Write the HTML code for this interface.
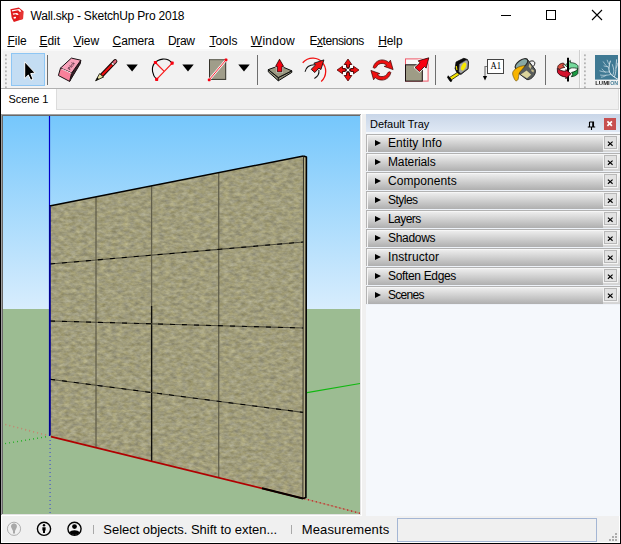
<!DOCTYPE html>
<html>
<head>
<meta charset="utf-8">
<title>Wall.skp - SketchUp Pro 2018</title>
<style>
html,body{margin:0;padding:0;}
body{width:621px;height:544px;overflow:hidden;background:#fff;font-family:"Liberation Sans",sans-serif;font-size:12px;color:#000;position:relative;}
.abs{position:absolute;}
#win{position:absolute;left:0;top:0;width:619px;height:542px;border:1px solid #000;background:#fff;overflow:hidden;}
/* coordinates inside #win are offset by 1px (border) -> use wrapper at -1,-1 */
#o{position:absolute;left:-1px;top:-1px;width:621px;height:544px;}
.t{position:absolute;white-space:nowrap;line-height:14px;}
#title{left:30.6px;top:9px;font-size:12px;letter-spacing:-0.21px;}
.menu{top:34px;font-size:12px;}
.menu u{text-decoration:underline;text-decoration-thickness:1px;text-underline-offset:1px;}
#toolbar{left:1px;top:49px;width:619px;height:39px;background:#f2f2f2;}
#tbline{left:1px;top:88px;width:619px;height:1px;background:#b0b0b0;}
#tabbar{left:56px;top:89px;width:563px;height:21px;border-right:1px solid #dcdcdc;background:#f0f0f0;border-bottom:1px solid #dcdcdc;border-left:1px solid #dcdcdc;box-sizing:border-box;}
#tab{left:1px;top:89px;width:55px;height:26px;background:#fff;}
#main{left:362px;top:114px;width:258px;height:402px;background:#f0f0f0;}
#vp{left:1px;top:114px;width:361px;height:402px;}
#tray{left:366px;top:114px;width:254px;height:402px;background:#f5f8fc;}
.item:after{content:"";position:absolute;left:0;top:18px;width:254px;height:1px;background:#eef2f8;}
#trayhead{left:0;top:0;width:254px;height:18px;background:linear-gradient(#c9d6e8,#dfe8f4);}
.item{left:0;width:254px;height:19px;background:#eef2f8;}
.item .g{position:absolute;left:0;top:0;width:254px;height:18px;border-top:1px solid #b2b2b2;border-left:1px solid #b4b4b4;background:linear-gradient(90deg,rgba(255,255,255,0) 236px,rgba(255,255,255,0.45) 236px),linear-gradient(#f3f3f3,#ebebeb 8%,#afafaf);box-sizing:border-box;box-shadow:inset 1px 1px 0 #f6f6f6;}
.item .tri{position:absolute;left:9px;top:6px;width:0;height:0;border-left:6px solid #000;border-top:3.5px solid transparent;border-bottom:3.5px solid transparent;}
.item .lab{position:absolute;left:22px;top:2px;font-size:12px;line-height:14px;white-space:nowrap;}
.item .x{position:absolute;left:237px;top:1px;width:15px;height:15px;box-sizing:border-box;border:1px solid #f4f4f4;background:#e2e2e2;box-shadow:inset 0 0 0 1px #b8b8b8;}
#status{left:2px;top:516px;width:617px;height:26px;background:#f0f0f0;}
</style>
</head>
<body>
<div id="win"><div id="o">

<!-- title bar -->
<svg class="abs" style="left:6px;top:3px" width="24" height="24" viewBox="6 3 24 24">
  <path d="M10.4 9.3 L18.8 7.6 L23.4 11.2 L23 18.9 L13.9 22 L11.7 18 Z" fill="#e01a1c"/>
  <path d="M19.6 12.6 L23.4 11.2 L23 18.9 L19.4 20.1 Z" fill="#e63434"/>
  <path d="M11.8 10.3 L19.2 9 C20.4 9.6 21 10.6 21.4 11.7 L19.3 11.8 C19 11 18.6 10.5 17.9 10.3 L12.2 11.4 Z" fill="#fff"/>
  <path d="M12.7 13.5 L17 12.9 C17.9 13.3 18.4 13.9 18.7 14.8 L16.8 14.9 C16.5 14.5 16.1 14.3 15.5 14.2 L13.2 14.7 Z" fill="#fff"/>
  <path d="M13.5 17.1 L15.9 16.7 L16 18.2 L13.9 18.7 Z" fill="#fff"/>
</svg>
<div class="t" id="title">Wall.skp - SketchUp Pro 2018</div>
<svg class="abs" style="left:495px;top:5px" width="115" height="22" viewBox="0 0 115 22">
  <path d="M6 10.5 H16" stroke="#000" stroke-width="1" fill="none"/>
  <rect x="51.5" y="5.5" width="9" height="9" stroke="#000" stroke-width="1" fill="none"/>
  <path d="M97 5 L107 15 M107 5 L97 15" stroke="#000" stroke-width="1.1" fill="none"/>
</svg>

<!-- menu bar -->
<div class="t menu" style="left:7.4px"><u>F</u>ile</div>
<div class="t menu" style="left:39.4px"><u>E</u>dit</div>
<div class="t menu" style="left:73.4px"><u>V</u>iew</div>
<div class="t menu" style="left:112.6px;letter-spacing:-0.15px"><u>C</u>amera</div>
<div class="t menu" style="left:168px;letter-spacing:-0.4px">D<u>r</u>aw</div>
<div class="t menu" style="left:209.4px"><u>T</u>ools</div>
<div class="t menu" style="left:250.8px;letter-spacing:0.25px"><u>W</u>indow</div>
<div class="t menu" style="left:309.4px;letter-spacing:-0.42px">E<u>x</u>tensions</div>
<div class="t menu" style="left:378.2px;letter-spacing:-0.1px"><u>H</u>elp</div>

<!-- toolbar -->
<div class="abs" id="toolbar"></div>
<div class="abs" style="left:1px;top:49px;width:619px;height:2px;background:#f8f8f8"></div>
<div class="abs" style="left:1px;top:49px;width:2px;height:39px;background:#f8f8f8"></div>
<div class="abs" id="tbline"></div>
<svg class="abs" id="tbicons" style="left:0;top:49px" width="621" height="40" viewBox="0 49 621 40">
  <!-- gripper 1 -->
  <g fill="#b4b4b4">
    <rect x="5" y="54.4" width="1.8" height="1.8"/><rect x="5" y="58.4" width="1.8" height="1.8"/><rect x="5" y="62.4" width="1.8" height="1.8"/><rect x="5" y="66.4" width="1.8" height="1.8"/><rect x="5" y="70.4" width="1.8" height="1.8"/><rect x="5" y="74.4" width="1.8" height="1.8"/><rect x="5" y="78.4" width="1.8" height="1.8"/><rect x="5" y="82.4" width="1.8" height="1.8"/><rect x="5" y="86.4" width="1.8" height="1.8"/>
  </g>
  <!-- select button -->
  <rect x="11.5" y="53.5" width="33" height="32" fill="#c4ddf3" stroke="#8ec6f4"/>
  <path d="M24.7 61.8 L24.7 78.6 L28.3 75 L30.7 80.2 L33 79.2 L30.7 73.6 L35.2 73 Z" fill="#000" stroke="#fff" stroke-width="1" stroke-linejoin="round"/>
  <!-- separators -->
  <g stroke="#6e6e6e" stroke-width="1">
    <path d="M47.5 55 V85"/><path d="M257.5 55 V85"/><path d="M435.5 55 V85"/><path d="M545.5 55 V85"/>
  </g>
  <!-- eraser -->
  <g stroke="#1a1014" stroke-width="1" stroke-linejoin="round">
    <path d="M71.6 73.1 L80.8 60.2 L80.3 63.6 L69.6 81.4 Z" fill="#3a2028"/>
    <path d="M60.5 68.1 L71.4 58.1 L80.8 60.2 L71.6 73.1 Z" fill="#f9a2ba"/>
    <path d="M60.5 68.1 L71.6 73.1 L69.6 81.4 L58.4 75.5 Z" fill="#f8809a"/>
  </g>
  <path d="M61.6 68.9 L71.3 73.3" stroke="#fde0e8" stroke-width="1" fill="none"/>
  <text transform="translate(69.9 70.4) rotate(-54)" opacity="0.92" font-family="'Liberation Sans',sans-serif" font-size="4.6" font-weight="bold" fill="#4a2838" textLength="9" lengthAdjust="spacingAndGlyphs">Pink</text>
  <!-- pencil -->
  <path d="M101.6 75.4 L115.2 61.3" stroke="#1a0808" stroke-width="4.3" stroke-linecap="round" fill="none"/>
  <path d="M95.6 80.8 L99.6 73.6 L103.6 77 Z" fill="#e6dfa0" stroke="#1a1a10" stroke-width="0.9" stroke-linejoin="round"/>
  <path d="M95.5 80.9 L97.4 77.6 L98.9 78.9 Z" fill="#000"/>
  <path d="M102 75 L112 64.7" stroke="#f01010" stroke-width="2.1" fill="none"/>
  <path d="M112.2 64.5 L113.5 63.2" stroke="#f4f4f4" stroke-width="2.1" fill="none"/>
  <path d="M114.2 62.4 L115.3 61.2" stroke="#e0687a" stroke-width="2.4" stroke-linecap="round" fill="none"/>
  <!-- dropdown arrows -->
  <g fill="#000">
    <path d="M126.4 64.4 H137.8 L132.1 71.4 Z"/>
    <path d="M182.3 64.4 H193.7 L188 71.4 Z"/>
    <path d="M238.3 64.4 H249.7 L244 71.4 Z"/>
  </g>
  <!-- arc -->
  <path d="M156.6 79.3 C152.4 75.4 150.8 68 154.4 63.4 C158 58.8 167 56.6 172.2 63.1" fill="none" stroke="#000" stroke-width="1.1"/>
  <path d="M156.6 79.3 L172.2 63.1 M155.4 62.5 L164.2 71.3" fill="none" stroke="#f81818" stroke-width="1.2"/>
  <g fill="#f80010"><rect x="153.9" y="61" width="3.1" height="3.1" rx="0.6"/><rect x="170.6" y="61.6" width="3.1" height="3.1" rx="0.6"/><rect x="155.1" y="77.8" width="3.1" height="3.1" rx="0.6"/></g>
  <!-- rectangle -->
  <rect x="209.5" y="59.6" width="16.2" height="19.8" fill="#a09d8a" stroke="#34322a" stroke-width="1"/>
  <path d="M209.5 59.6 H225.7" stroke="#77756a" stroke-width="1"/>
  <path d="M209.2 79.8 L226 59.9" stroke="#fff" stroke-width="2.3"/>
  <path d="M209.2 79.8 L226 59.9" stroke="#ff2030" stroke-width="1"/>
  <g fill="#f80010"><rect x="207.8" y="78.4" width="2.8" height="2.8" rx="0.7"/><rect x="224.6" y="58.5" width="2.8" height="2.8" rx="0.7"/></g>
  <!-- push/pull -->
  <g stroke="#0c0c0c" stroke-width="1" stroke-linejoin="round">
    <path d="M268.3 69.6 L268.3 71.8 L278.3 80.8 L291.8 72.4 L291.8 70.8 L278.3 77.5 Z" fill="#8e8c76"/>
    <path d="M268.3 69.6 L279.5 65.6 L291.8 70.8 L278.3 77.5 Z" fill="#9c9a82"/>
    <path d="M278.3 77.5 V80.8" fill="none"/>
  </g>
  <path d="M279.5 59.3 L283.6 66.4 L281.9 66.4 L281.9 71.8 L277.3 71.8 L277.3 66.4 L275.6 66.4 Z" fill="#f80010" stroke="#e8e8e0" stroke-width="2" stroke-linejoin="round"/>
  <path d="M279.5 59.3 L283.6 66.4 L281.9 66.4 L281.9 71.8 L277.3 71.8 L277.3 66.4 L275.6 66.4 Z" fill="#f80010" stroke="#200000" stroke-width="0.8" stroke-linejoin="round"/>
  <!-- offset / follow me -->
  <path d="M302.7 62.8 C305.6 59.6 309.6 58 313.4 58.2 C320.4 58.6 325.8 64.4 325.7 71.4 C325.6 75.4 323.8 79 321.2 81.4" fill="none" stroke="#f01010" stroke-width="1.3"/>
  <path d="M315 64.7 C309.6 64.4 305.6 67.4 305.1 71.8 M318.9 69.8 C319.4 73.6 317.6 76.8 314.4 78.4" fill="none" stroke="#111" stroke-width="1.1"/>
  <path d="M323.9 59.9 L320.9 69.6 L318.9 68.0 L314.8 72.5 L311.2 69.3 L315.6 64.9 L313.9 63.2 Z" fill="#f01010" stroke="#111" stroke-width="0.9" stroke-linejoin="round"/>
  <!-- move -->
  <g transform="translate(348 70)">
    <path d="M0 -8.6 L8.6 0 L0 8.6 L-8.6 0 Z" fill="#3a2222"/>
    <g fill="#f01010" stroke="#3a0000" stroke-width="0.7" stroke-linejoin="round">
      <path d="M0 -11 L3.9 -5.4 L1.3 -5.4 L1.3 -2.4 L-1.3 -2.4 L-1.3 -5.4 L-3.9 -5.4 Z" transform="rotate(0)"/>
      <path d="M0 -11 L3.9 -5.4 L1.3 -5.4 L1.3 -2.4 L-1.3 -2.4 L-1.3 -5.4 L-3.9 -5.4 Z" transform="rotate(90)"/>
      <path d="M0 -11 L3.9 -5.4 L1.3 -5.4 L1.3 -2.4 L-1.3 -2.4 L-1.3 -5.4 L-3.9 -5.4 Z" transform="rotate(180)"/>
      <path d="M0 -11 L3.9 -5.4 L1.3 -5.4 L1.3 -2.4 L-1.3 -2.4 L-1.3 -5.4 L-3.9 -5.4 Z" transform="rotate(270)"/>
    </g>
    <g fill="#fdfdfd"><rect x="-5" y="-5" width="3" height="3"/><rect x="2" y="-5" width="3" height="3"/><rect x="-5" y="2" width="3" height="3"/><rect x="2" y="2" width="3" height="3"/><rect x="-1.2" y="-1.2" width="2.4" height="2.4"/></g>
    <g fill="#e4e4e4"><rect x="-2.4" y="-2.4" width="1.3" height="1.3"/><rect x="1.1" y="-2.4" width="1.3" height="1.3"/><rect x="-2.4" y="1.1" width="1.3" height="1.3"/><rect x="1.1" y="1.1" width="1.3" height="1.3"/></g>
  </g>
  <!-- rotate -->
  <g transform="translate(382 70)" fill="#f01010" stroke="#3a0000" stroke-width="0.7" stroke-linejoin="round">
    <path d="M-8.8 -2.6 C-8 -7 -4 -10.1 0 -10.1 C2.6 -10.1 5 -9.2 6.9 -7.5 L8.4 -9.8 L11.1 -0.4 L2.2 -3.6 L4.6 -4.6 C3.4 -6 1.6 -6.6 0 -6.6 C-2.6 -6.6 -4.8 -5 -5.7 -2.9 C-6.4 -1.6 -8.6 -1.4 -8.8 -2.6 Z"/>
    <path d="M-8.8 -2.6 C-8 -7 -4 -10.1 0 -10.1 C2.6 -10.1 5 -9.2 6.9 -7.5 L8.4 -9.8 L11.1 -0.4 L2.2 -3.6 L4.6 -4.6 C3.4 -6 1.6 -6.6 0 -6.6 C-2.6 -6.6 -4.8 -5 -5.7 -2.9 C-6.4 -1.6 -8.6 -1.4 -8.8 -2.6 Z" transform="rotate(180)"/>
  </g>
  <!-- scale -->
  <rect x="405.5" y="58.9" width="22.6" height="22.2" fill="#f8f8f8" stroke="#f05868" stroke-width="1"/>
  <rect x="405.5" y="64.8" width="16.8" height="16.3" fill="#9e9c86" stroke="#1a1010" stroke-width="1"/>
  <path d="M428.8 57.8 L426.2 68.1 L424.4 66.6 L419.4 71.6 L415 67.5 L420 62.8 L418.2 60.8 Z" fill="#f80010" stroke="#fff" stroke-width="2" stroke-linejoin="round"/>
  <path d="M428.8 57.8 L426.2 68.1 L424.4 66.6 L419.4 71.6 L415 67.5 L420 62.8 L418.2 60.8 Z" fill="#f80010" stroke="#200000" stroke-width="0.8" stroke-linejoin="round"/>
  <!-- tape measure -->
  <path d="M457.8 72.2 L459.4 74.6 L451.4 79.9 L449.6 77.4 Z" fill="#f2e200" stroke="#1a1a00" stroke-width="0.8" stroke-linejoin="round"/>
  <path d="M448.3 75.8 L452 80.9 L450.4 81.6 L447.5 77.4 Z" fill="#000" stroke="#000" stroke-width="0.8" stroke-linejoin="round"/>
  <path d="M456.1 62 L463.8 58.3 L467.4 59.5 L468.6 62 L468.1 68.8 L460.9 74.4 L456.8 72.4 L455.1 68.7 Z" fill="#0a0a0a" stroke="#0a0a0a" stroke-width="0.8" stroke-linejoin="round"/>
  <path d="M459.4 64.2 L466 60.2 C467.6 60 468 61.2 468 62.4 L467.6 68.5 L460.9 73.6 L458.9 71.8 Z" fill="#a6a6a6" stroke="#5a5a5a" stroke-width="0.5" stroke-linejoin="round"/>
  <ellipse cx="463.6" cy="66.5" rx="2.1" ry="4.2" transform="rotate(27 463.6 66.5)" fill="#f6e800"/>
  <path d="M456.3 66 L456.9 70" stroke="#e8d800" stroke-width="1.2"/>
  <!-- text tool -->
  <rect x="487.5" y="59.5" width="16" height="14" fill="#fff" stroke="#444" stroke-width="1"/>
  <text x="495.7" y="68.9" font-family="'Liberation Serif',serif" font-size="9.6" text-anchor="middle" fill="#000" textLength="10.6" lengthAdjust="spacingAndGlyphs">A1</text>
  <path d="M487 66.5 H485 V76.4" fill="none" stroke="#777" stroke-width="1.2"/>
  <path d="M482.9 76 H487.1 L485 80.6 Z" fill="#000"/>
  <!-- paint bucket -->
  <g stroke-linejoin="round">
    <path d="M529.4 61.8 C531.6 60.2 534.8 60.8 534.8 63.2 C534.8 64.8 533.8 66.2 532.4 66.9" fill="none" stroke="#1a1a1a" stroke-width="1"/>
    <path d="M527.4 59.4 L535.2 69.6 C536.2 72.4 534.2 76 532 77.8 C530.4 79.2 528.4 80 526.8 79.5 L519.2 73.8 L515.4 68 Z" fill="#585c5c" stroke="#1e1e1e" stroke-width="0.9"/>
    <path d="M526.6 70.6 L531.2 74.8 L527 78.3 L520.8 74.4 Z" fill="#dcd49c"/>
    <path d="M529.4 63.6 L531.6 66.6 L530.6 68.9 L528.6 66.6 Z" fill="#c8bc88"/>
    <path d="M531.6 69 L534 70.5 L533.4 72.4 L531.2 71 Z" fill="#c8bc88"/>
    <ellipse cx="521.5" cy="63.9" rx="7.3" ry="3.7" transform="rotate(-36 521.5 63.9)" fill="#88a8a4" stroke="#2a2a2a" stroke-width="1.2"/>
    <path d="M524.8 65.8 C522 65.6 519 66.6 516.8 68 C514.6 69.4 513 71 512.7 72.6 C512.4 74.6 513.2 76.4 513.9 77.8 C514.4 79 515 80.4 515.8 80.8 C516.8 81 517.8 80.2 518.2 79 C518.8 77.4 518.4 75.6 519 73.8 C519.6 72.2 520.8 70.8 522 69.6 C523 68.4 524.4 67 524.8 65.8 Z" fill="#f8b400" stroke="#5a4200" stroke-width="0.6"/>
  </g>
  <!-- orbit-like (red/green arrows) -->
  <ellipse cx="567.8" cy="69.6" rx="7" ry="3.2" fill="#fff"/>
  <g stroke-linejoin="round" stroke-width="0.8">
    <path d="M557.6 67.4 C557.8 65 560.2 63.4 563.4 63 L564.8 64.6 L562.6 65.4 L564.8 67.4 C562.4 67.8 560.6 68.4 559.6 69.4 Z" fill="#dc5040" stroke="#2a0a08"/>
    <path d="M565.2 65.3 L570.3 60.4 L570.5 62.7 C573.6 62.6 576.6 63.8 578 65.8 L578 68.8 C576 67.6 573 67.8 570.3 68 L569.8 69.2 Z" fill="#74da9c" stroke="#0c3018"/>
    <path d="M578 68.8 L577.8 73.6 C576.6 75.4 574.2 76.4 571.4 76.7 L572.8 74.2 L571.6 72.4 C574.4 72 576.8 70.6 578 68.8 Z" fill="#1c9c44" stroke="#06280e"/>
  </g>
  <path d="M568 57.8 V81.6" stroke="#000" stroke-width="2"/>
  <path d="M557.3 68.2 C559 70 562.4 71.4 566 71.2 L565.8 69.6 L570.9 73.7 L565.8 78.8 L566 77 C562.4 76.8 558.8 75 557.5 72.4 Z" fill="#d4102c" stroke="#200006" stroke-width="0.8" stroke-linejoin="round"/>
  <!-- toolbar divider + gripper 2 -->
  <path d="M579.5 50 V88" stroke="#cfcfcf" stroke-width="1"/>
  <path d="M580.5 50 V88" stroke="#fafafa" stroke-width="1"/>
  <g fill="#b4b4b4">
    <rect x="584" y="54.4" width="1.8" height="1.8"/><rect x="584" y="58.4" width="1.8" height="1.8"/><rect x="584" y="62.4" width="1.8" height="1.8"/><rect x="584" y="66.4" width="1.8" height="1.8"/><rect x="584" y="70.4" width="1.8" height="1.8"/><rect x="584" y="74.4" width="1.8" height="1.8"/><rect x="584" y="78.4" width="1.8" height="1.8"/><rect x="584" y="82.4" width="1.8" height="1.8"/><rect x="584" y="86.4" width="1.8" height="1.8"/>
  </g>
  <!-- lumion -->
  <rect x="595" y="55" width="23" height="24.6" fill="#3f7993"/>
  <g stroke="#eef6fa" fill="none" stroke-linecap="round" opacity="0.92">
    <path d="M618 79.3 C615 77.6 612.6 76 611 74.4 C609.4 72.4 608.8 70.4 608.9 68.1 C609 65.6 609.6 63.4 610.3 61.1" stroke-width="1"/>
    <path d="M614.5 76.6 C615.4 74.4 615.8 72 615.9 69.5 C616 66.2 616.3 63 616.6 59.7" stroke-width="0.8"/>
    <path d="M612.6 75.6 C613.4 73.8 613.8 72 613.8 70.2 C613.6 68.2 613 66.4 612.4 64.6" stroke-width="0.7"/>
    <path d="M611 74.4 C607.6 75.4 604 75.6 600.5 75.1 M609.6 71.8 C606.4 72.4 603 72 599.8 70.9 M608.9 68.1 C606.6 66.4 604.8 64.2 603.3 61.8 M607.4 66.6 C606.2 66.6 605 66.4 604 66 M609.4 64.6 C608.4 63.4 607.6 61.8 607.2 60.2 M616 68 C617 66.6 617.6 65 617.8 63.2 M605.4 72.2 C604 71.4 602.8 70.2 602 69 M606 75.4 C604.6 76.4 603 77 601.4 77.2" stroke-width="0.6"/>
  </g>
  <g opacity="0.96">
  <text x="595.2" y="84.9" font-family="'Liberation Sans',sans-serif" font-weight="bold" font-size="5.3" fill="#111" textLength="14.6" lengthAdjust="spacingAndGlyphs">LUMI</text>
  <text x="610.2" y="84.9" font-family="'Liberation Sans',sans-serif" font-weight="bold" font-size="5.3" fill="#3f7993" textLength="8" lengthAdjust="spacingAndGlyphs">ON</text>
  </g>
</svg>

<!-- scene tabs -->
<div class="abs" id="tabbar"></div>
<div class="abs" id="tab"></div>
<div class="t" style="left:8.6px;top:91.5px;font-size:11px;letter-spacing:-0.08px">Scene 1</div>

<!-- main -->
<div class="abs" id="main"></div>
<svg class="abs" id="vp" width="361" height="402" viewBox="1 114 361 402">
  <defs>
    <linearGradient id="sky" x1="0" y1="0" x2="0" y2="1">
      <stop offset="0" stop-color="#75c7fc"/>
      <stop offset="1" stop-color="#d8edfd"/>
    </linearGradient>
    <filter id="stone" x="0" y="0" width="100%" height="100%" color-interpolation-filters="sRGB">
      <feTurbulence type="fractalNoise" baseFrequency="0.17 0.3" numOctaves="3" seed="7" result="n"/>
      <feColorMatrix in="n" type="matrix" values="0.260 0.06 0 0 0.471  0.260 0.04 0 0 0.466  0.234 -0.08 0 0 0.409  0 0 0 0 1"/>
      <feComposite in2="SourceGraphic" operator="in"/>
    </filter>
  </defs>
  <rect x="1" y="114" width="361" height="402" fill="#fff"/>
  <rect x="3" y="116" width="357" height="193" fill="url(#sky)"/>
  <rect x="3" y="309" width="357" height="205" fill="#9cbc92"/>
  <path d="M1 114.5 H361 M1.5 114 V515" stroke="#a0a0a0" stroke-width="1" fill="none"/>
  <path d="M360.5 115 V515 M2 514.5 H361" stroke="#e3e3e3" stroke-width="1" fill="none"/>
  <path d="M2 115.5 H360 M2.5 115 V514" stroke="#696969" stroke-width="1" fill="none"/>
  <!-- axes behind -->
  <path d="M49.5 116 V436" stroke="#0000c8" stroke-width="1.2"/>
  <path d="M307 392.6 L360 383.5" stroke="#10b810" stroke-width="1.1"/>
  <path d="M50.1 440 V513" stroke="#5668c2" stroke-width="1.5" stroke-dasharray="1 3"/>
  <path d="M46 435 L5 424.4" stroke="#c8806c" stroke-width="1.6" stroke-dasharray="1 3.1"/>
  <path d="M46 436.8 L5 443.6" stroke="#28b028" stroke-width="1.4" stroke-dasharray="1 3.05"/>
  <path d="M304 498.7 L360 513.2" stroke="#b48c6c" stroke-width="1.2" opacity="0.7"/>
  <path d="M304 498.7 L360 513.2" stroke="#c80010" stroke-width="1.05" stroke-dasharray="1.2 2.85"/>
  <!-- wall -->
  <path d="M49.5 206 L303.5 156 L303 498.5 L50 436.5 Z" fill="#97906c" filter="url(#stone)"/>
  <path d="M303.5 156 L306.5 157 L306 497.5 L303 498.5 Z" fill="#b4ad88"/>
  <!-- inner lines -->
  <g stroke="#615e4b" stroke-width="1.25" fill="none">
    <path d="M96 197 L96 447.6"/>
    <path d="M151.6 186 L151.6 461"/>
    <path d="M218.7 173 L218.7 477.4"/>
  </g>
  <path d="M151.6 306 L151.6 461" stroke="#0c0c0a" stroke-width="1.3" fill="none"/>
  <g stroke="#4a4839" stroke-width="1.1" fill="none">
    <path d="M50 264 L303.3 242"/>
    <path d="M50 321 L303.2 328"/>
    <path d="M50 379.2 L303.1 412.4"/>
  </g>
  <g stroke="#000" stroke-width="1.1" fill="none" stroke-dasharray="5 7">
    <path d="M50 264 L303.3 242"/>
    <path d="M50 321 L303.2 328"/>
    <path d="M50 379.2 L303.1 412.4"/>
  </g>
  <!-- profile lines -->
  <g stroke="#000" fill="none" stroke-linejoin="round">
    <path d="M49.5 206 L303.5 156" stroke-width="1.5"/>
    <path d="M303.5 156 L302.9 498.4" stroke-width="0.9" stroke="#2a281e"/>
    <path d="M303.5 156 L306.4 157 L305.9 497.6 L303 498.5" stroke-width="1.6"/>
    <path d="M51 436.6 L303 498.5" stroke-width="1.7" stroke="#b00000"/>
    <path d="M262 488.2 L303 498.5" stroke-width="2" stroke="#050000"/>
    <path d="M49.9 206 V435.6" stroke-width="1.8" stroke="#000090"/>
  </g>
</svg>

<div class="abs" id="tray">
  <div class="abs" id="trayhead"></div>
  <div class="t" style="left:4px;top:3px;font-size:11px">Default Tray</div>
  <div class="abs" style="left:220.6px;top:5.5px;width:9px;height:10px">
    <svg width="9" height="10" viewBox="0 0 9 10"><path d="M2.5 1 H6.5 V6 M2.5 1 V6 M5.75 1 V6 M0.8 6 H8.2 M4.5 6 V9" fill="none" stroke="#000" stroke-width="1.1"/></svg>
  </div>
  <div class="abs" style="left:238px;top:4px;width:12px;height:12px;background:#c75050">
    <svg width="12" height="12" viewBox="0 0 12 12"><path d="M3.4 3.4 L7.9 7.9 M7.9 3.4 L3.4 7.9" stroke="#fff" stroke-width="1.7" fill="none"/></svg>
  </div>
  <div class="abs item" style="top:20px"><div class="g"></div><div class="tri"></div><div class="lab" style="letter-spacing:0.05px">Entity Info</div><div class="x"><svg width="13" height="13" viewBox="0 0 13 13" style="position:absolute;left:0;top:0"><path d="M3.9 5.6 L8.6 9.8 M8.6 5.6 L3.9 9.8" stroke="#000" stroke-width="1.15" fill="none"/></svg></div></div>
  <div class="abs item" style="top:39px"><div class="g"></div><div class="tri"></div><div class="lab" style="letter-spacing:-0.13px">Materials</div><div class="x"><svg width="13" height="13" viewBox="0 0 13 13" style="position:absolute;left:0;top:0"><path d="M3.9 5.6 L8.6 9.8 M8.6 5.6 L3.9 9.8" stroke="#000" stroke-width="1.15" fill="none"/></svg></div></div>
  <div class="abs item" style="top:58px"><div class="g"></div><div class="tri"></div><div class="lab" style="letter-spacing:0.08px">Components</div><div class="x"><svg width="13" height="13" viewBox="0 0 13 13" style="position:absolute;left:0;top:0"><path d="M3.9 5.6 L8.6 9.8 M8.6 5.6 L3.9 9.8" stroke="#000" stroke-width="1.15" fill="none"/></svg></div></div>
  <div class="abs item" style="top:77px"><div class="g"></div><div class="tri"></div><div class="lab" style="letter-spacing:-0.53px">Styles</div><div class="x"><svg width="13" height="13" viewBox="0 0 13 13" style="position:absolute;left:0;top:0"><path d="M3.9 5.6 L8.6 9.8 M8.6 5.6 L3.9 9.8" stroke="#000" stroke-width="1.15" fill="none"/></svg></div></div>
  <div class="abs item" style="top:96px"><div class="g"></div><div class="tri"></div><div class="lab" style="letter-spacing:-0.55px">Layers</div><div class="x"><svg width="13" height="13" viewBox="0 0 13 13" style="position:absolute;left:0;top:0"><path d="M3.9 5.6 L8.6 9.8 M8.6 5.6 L3.9 9.8" stroke="#000" stroke-width="1.15" fill="none"/></svg></div></div>
  <div class="abs item" style="top:115px"><div class="g"></div><div class="tri"></div><div class="lab" style="letter-spacing:-0.3px">Shadows</div><div class="x"><svg width="13" height="13" viewBox="0 0 13 13" style="position:absolute;left:0;top:0"><path d="M3.9 5.6 L8.6 9.8 M8.6 5.6 L3.9 9.8" stroke="#000" stroke-width="1.15" fill="none"/></svg></div></div>
  <div class="abs item" style="top:134px"><div class="g"></div><div class="tri"></div><div class="lab" style="letter-spacing:0.11px">Instructor</div><div class="x"><svg width="13" height="13" viewBox="0 0 13 13" style="position:absolute;left:0;top:0"><path d="M3.9 5.6 L8.6 9.8 M8.6 5.6 L3.9 9.8" stroke="#000" stroke-width="1.15" fill="none"/></svg></div></div>
  <div class="abs item" style="top:153px"><div class="g"></div><div class="tri"></div><div class="lab" style="letter-spacing:-0.34px">Soften Edges</div><div class="x"><svg width="13" height="13" viewBox="0 0 13 13" style="position:absolute;left:0;top:0"><path d="M3.9 5.6 L8.6 9.8 M8.6 5.6 L3.9 9.8" stroke="#000" stroke-width="1.15" fill="none"/></svg></div></div>
  <div class="abs item" style="top:172px"><div class="g"></div><div class="tri"></div><div class="lab" style="letter-spacing:-0.7px">Scenes</div><div class="x"><svg width="13" height="13" viewBox="0 0 13 13" style="position:absolute;left:0;top:0"><path d="M3.9 5.6 L8.6 9.8 M8.6 5.6 L3.9 9.8" stroke="#000" stroke-width="1.15" fill="none"/></svg></div></div>
</div>

<!-- status bar -->
<div class="abs" id="status"></div>
<svg class="abs" style="left:1px;top:516px" width="619" height="26" viewBox="1 516 619 26">
  <circle cx="14" cy="528.8" r="6.6" fill="none" stroke="#a6a6a6" stroke-width="0.9"/>
  <path d="M14 523.6 C16.4 523.6 17.6 526 16.6 527.8 L15 531 V533.4 H13 V531 L11.400000000000001 527.8 C10.4 526 11.6 523.6 14 523.6 Z" fill="#a8a8a8"/>
  <circle cx="44" cy="528.8" r="6.6" fill="none" stroke="#000" stroke-width="1.4"/>
  <circle cx="44" cy="525.2" r="1.2" fill="#000"/>
  <path d="M42.4 527.2 H45.6 V530.4 H45 V533 H43 V530.4 H42.4 Z" fill="#000"/>
  <circle cx="74.5" cy="528.8" r="6.6" fill="none" stroke="#000" stroke-width="1.4"/>
  <circle cx="74.5" cy="526.6" r="2.4" fill="#000"/>
  <path d="M69.6 532.6 C70.6 529.6 78.4 529.6 79.4 532.6 C78 534.4 76.4 535 74.5 535 C72.6 535 71 534.4 69.6 532.6 Z" fill="#000"/>
  <path d="M93.5 525 V534 M291.5 525 V534" stroke="#a8a8a8" stroke-width="1"/>
  <rect x="397.5" y="518.5" width="199" height="23" fill="#f0f0f0" stroke="#a4b6d4" stroke-width="1"/>
  <g fill="#adadad">
    <rect x="615" y="533" width="2" height="2"/><rect x="612" y="536" width="2" height="2"/><rect x="615" y="536" width="2" height="2"/><rect x="609" y="539" width="2" height="2"/><rect x="612" y="539" width="2" height="2"/><rect x="615" y="539" width="2" height="2"/>
  </g>
</svg>
<div class="t" style="left:103.3px;top:523px;font-size:13px;letter-spacing:-0.03px">Select objects. Shift to exten...</div>
<div class="t" style="left:301.8px;top:523px;font-size:13px;letter-spacing:0.13px">Measurements</div>

</div></div>
</body>
</html>
